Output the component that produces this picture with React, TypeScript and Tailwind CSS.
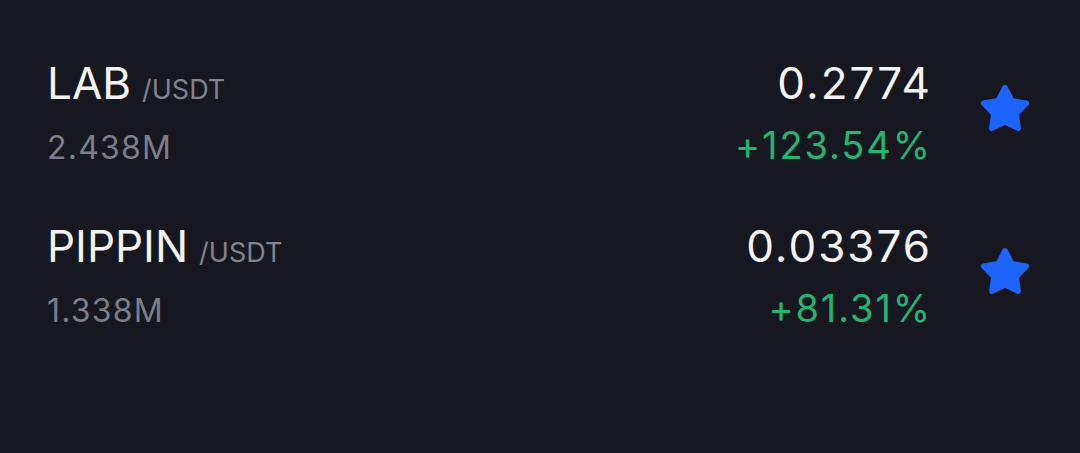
import React from "react";

type Pair = {
  base: string;
  quote: string;
  volume: string;
  price: string;
  change: string;
};

const pairs: Pair[] = [
  { base: "LAB", quote: "/USDT", volume: "2.438M", price: "0.2774", change: "+123.54%" },
  { base: "PIPPIN", quote: "/USDT", volume: "1.338M", price: "0.03376", change: "+81.31%" },
];

function Star() {
  return (
    <svg viewBox="0 0 24 24" className="h-[54px] w-[54px]" aria-hidden="true">
      <polygon
        points="12,2.5 15.06,8.29 21.51,9.41 16.95,14.11 17.88,20.59 12,17.7 6.12,20.59 7.05,14.11 2.49,9.41 8.94,8.29"
        fill="#1d64fa"
        stroke="#1d64fa"
        strokeWidth="2.4"
        strokeLinejoin="round"
      />
    </svg>
  );
}

function PairRow({ pair }: { pair: Pair }) {
  return (
    <div className="flex items-start">
      <div className="flex-1">
        <div className="flex items-baseline">
          <span className="text-[44px] leading-[44px] text-[#f4f4f6]">{pair.base}</span>
          <span className="ml-[11px] text-[27px] leading-none text-[#80838c]">{pair.quote}</span>
        </div>
        <div className="mt-[27px] text-[32px] leading-[32px] tracking-[1.2px] text-[#7c7f88]">
          {pair.volume}
        </div>
      </div>
      <div className="mr-[-2px] text-right">
        <div className="text-[44px] leading-[44px] tracking-[2px] text-[#f4f4f6]">{pair.price}</div>
        <div className="mt-[21px] text-[38px] leading-[38px] tracking-[1.9px] text-[#22b574]">
          {pair.change}
        </div>
      </div>
      <div className="ml-[48px] mt-[21px]">
        <Star />
      </div>
    </div>
  );
}

export default function App() {
  return (
    <div
      className="flex h-[453px] w-full flex-col gap-[60px] bg-[#17181f] pl-[47px] pr-[48px] pt-[61px]"
      style={{ fontFamily: "Inter, 'Noto Sans', sans-serif" }}
    >
      {pairs.map((pair) => (
        <PairRow key={pair.base} pair={pair} />
      ))}
    </div>
  );
}
